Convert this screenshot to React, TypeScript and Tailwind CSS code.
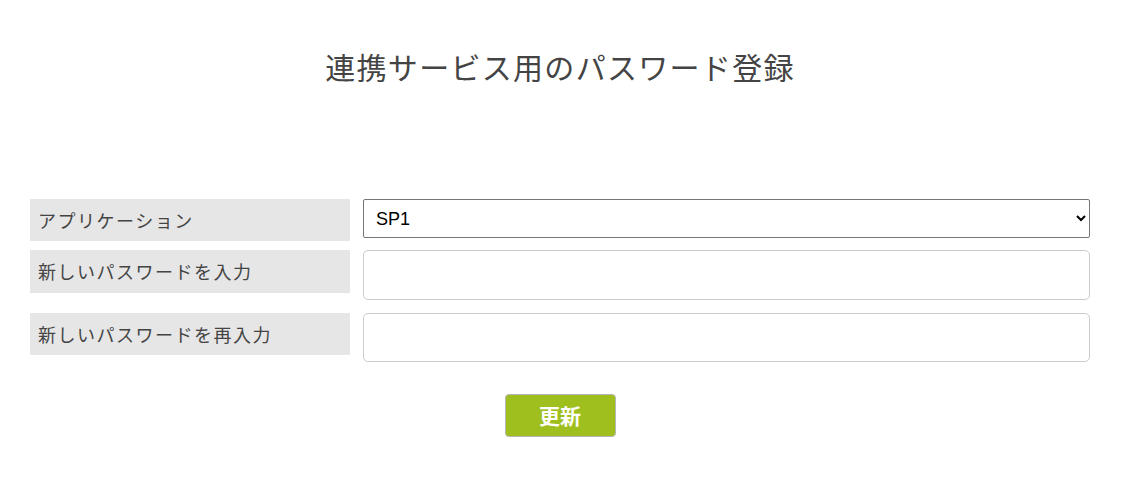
import React, { useState } from 'react';

const labelClass =
  'w-[320px] shrink-0 bg-[#e6e6e6] pl-[8px] flex items-center text-[18px] tracking-[1.5px] text-[#444]';

export default function App() {
  const [app, setApp] = useState('SP1');
  const [pw, setPw] = useState('');
  const [pw2, setPw2] = useState('');

  return (
    <div className="w-[1130px] h-[502px] bg-white font-['Noto_Sans_CJK_JP',sans-serif]">
      <div className="w-[1060px] ml-[30px]">
        {/* Title */}
        <h1 className="pt-[44px] text-center text-[30px] leading-[44px] tracking-[1.3px] font-normal text-[#444]">
          連携サービス用のパスワード登録
        </h1>

        <form className="mt-[111px]" onSubmit={e => e.preventDefault()}>
          {/* Application */}
          <div className="flex items-start mb-[9px]">
            <div className={`${labelClass} h-[42px]`}>アプリケーション</div>
            <select
              value={app}
              onChange={e => setApp(e.target.value)}
              className="ml-[13px] w-[727px] h-[39px] border border-[#767676] rounded-[2px] bg-white pl-[8px] text-[18px] text-black font-['Liberation_Sans',sans-serif]"
            >
              <option value="SP1">SP1</option>
              <option value="SP2">SP2</option>
            </select>
          </div>

          {/* New password */}
          <div className="flex items-start mb-[13px]">
            <div className={`${labelClass} h-[43px] pb-[1px]`}>新しいパスワードを入力</div>
            <input
              type="password"
              value={pw}
              onChange={e => setPw(e.target.value)}
              className="ml-[13px] w-[727px] h-[50px] border border-[#cccccc] rounded-[5px] bg-white px-[10px] text-[18px]"
            />
          </div>

          {/* Confirm password */}
          <div className="flex items-start">
            <div className={`${labelClass} h-[42px]`}>新しいパスワードを再入力</div>
            <input
              type="password"
              value={pw2}
              onChange={e => setPw2(e.target.value)}
              className="ml-[13px] w-[727px] h-[49px] border border-[#cccccc] rounded-[5px] bg-white px-[10px] text-[18px]"
            />
          </div>

          <div className="flex justify-center mt-[32px]">
            <button
              type="submit"
              className="w-[111px] h-[43px] bg-[#9fbf1f] border border-[#b5b5b5] rounded-[4px] text-white text-[21px] font-bold"
            >
              更新
            </button>
          </div>
        </form>
      </div>
    </div>
  );
}
